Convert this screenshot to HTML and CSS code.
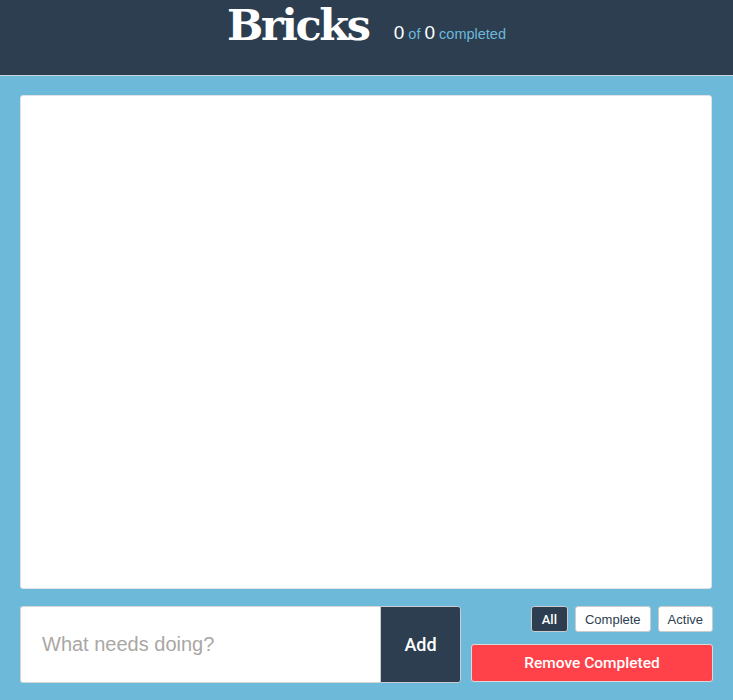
FILE: index.html
```html
<!DOCTYPE html>
<html>
<head>
<meta charset="utf-8">
<link rel="stylesheet" href="styles.css">
</head>
<body>
<header class="header">
  <h1 class="title">Bricks</h1>
  <div class="count"><span class="num">0</span> <span class="lbl">of</span> <span class="num">0</span> <span class="lbl">completed</span></div>
</header>
<main class="main">
  <section class="list"></section>
  <div class="bottom">
    <form class="add-form">
      <input class="new-todo" type="text" placeholder="What needs doing?">
      <button class="add-btn" type="button">Add</button>
    </form>
    <div class="controls">
      <div class="filters">
        <button class="filter active" type="button">All</button>
        <button class="filter" type="button">Complete</button>
        <button class="filter" type="button">Active</button>
      </div>
      <button class="remove" type="button">Remove Completed</button>
    </div>
  </div>
</main>
</body>
</html>
```
FILE: styles.css
```css
html, body {
  margin: 0;
  padding: 0;
  height: 100%;
}
body {
  background: #6cb9da;
  font-family: "Helvetica Neue", "Liberation Sans", Arial, sans-serif;
}
.header {
  background: #2c3e50;
  height: 75px;
  border-bottom: 1px solid #c9d3da;
  display: flex;
  justify-content: center;
  align-items: flex-start;
  gap: 25px;
}
.title {
  margin: 0;
  color: #fff;
  font-family: "DejaVu Serif", serif;
  font-weight: bold;
  font-size: 43px;
  line-height: 50px;
  letter-spacing: -2.3px;
}
.count {
  margin-top: 22px;
  color: #6cb9da;
  font-size: 14.5px;
}
.count .num {
  color: #fff;
  font-size: 19px;
}
.main {
  padding: 19px 20px 17px 20px;
  display: flex;
  flex-direction: column;
  gap: 17px;
}
.list {
  background: #fff;
  height: 492px;
  border: 1px solid #dfe3e6;
  border-radius: 3px;
  margin-right: 1px;
}
.bottom {
  display: flex;
  gap: 10px;
  height: 77px;
}
.add-form {
  display: flex;
  margin: 0;
}
.new-todo {
  width: 360px;
  box-sizing: border-box;
  height: 77px;
  border: 1px solid #d6d6d6;
  border-right: none;
  border-radius: 3px 0 0 3px;
  padding: 0 21px;
  font-size: 20px;
  font-family: "Helvetica Neue", "Liberation Sans", Arial, sans-serif;
  color: #333;
  outline: none;
}
.new-todo::placeholder {
  color: #aaa7a4;
}
.add-btn {
  width: 81px;
  height: 77px;
  background: #2c3e50;
  color: #fff;
  border: 1px solid #c9ccd0;
  border-radius: 0 3px 3px 0;
  font-size: 18px;
  font-family: Roboto, "Liberation Sans", Arial, sans-serif;
  font-weight: 500;
  padding: 0;
}
.controls {
  width: 242px;
  display: flex;
  flex-direction: column;
  justify-content: space-between;
  align-items: flex-end;
}
.filters {
  display: flex;
  gap: 7px;
}
.filter {
  height: 26px;
  background: #fff;
  color: #2c3e50;
  border: 1px solid #ccc;
  border-radius: 3px;
  font-size: 13px;
  font-family: "Helvetica Neue", "Liberation Sans", Arial, sans-serif;
  padding: 0 9px;
}
.filter.active {
  background: #2c3e50;
  color: #fff;
  padding: 0 10px;
  font-family: Roboto, "Liberation Sans", sans-serif;
  font-weight: 500;
}
.remove {
  width: 242px;
  height: 38px;
  background: #ff414a;
  color: #fff;
  border: 1px solid #d9d9d9;
  border-radius: 3px;
  font-size: 15.5px;
  font-family: Roboto, "Liberation Sans", Arial, sans-serif;
  font-weight: 500;
  padding: 0;
  margin-bottom: 1px;
}
```
